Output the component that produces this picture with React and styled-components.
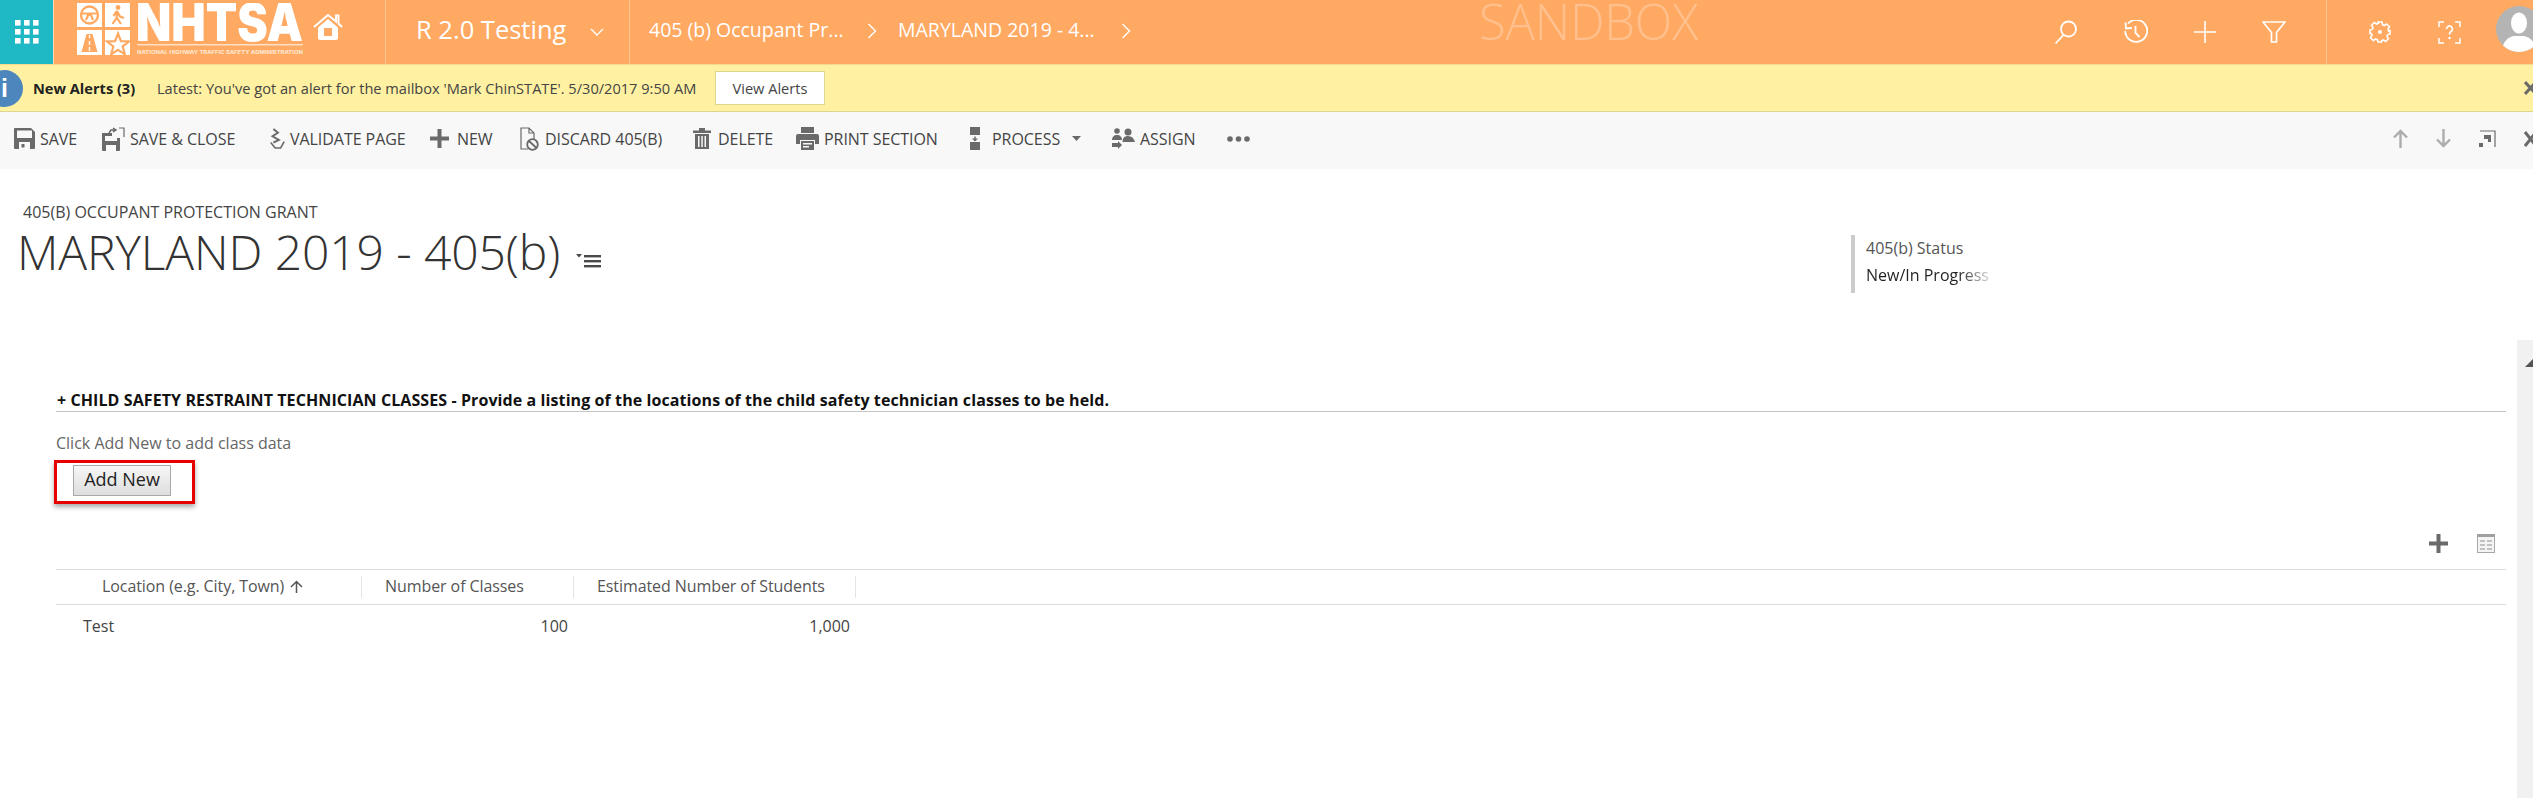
import React from 'react';
import styled, { createGlobalStyle } from 'styled-components';

const GlobalStyle = createGlobalStyle`
  html, body {
    margin: 0;
    height: 100%;
    overflow: hidden;
    background: #fff;
    font-family: "Open Sans", "Noto Sans", "Liberation Sans", sans-serif;
  }
  * { box-sizing: border-box; }
`;

const Shell = styled.div`
  height: 100vh;
  display: flex;
  flex-direction: column;
`;

/* top nav */
const Nav = styled.header`
  position: relative;
  height: 65px;
  flex: none;
  display: flex;
  align-items: stretch;
  background: #ffa962;
  border-bottom: 1px solid #f5d98c;
  color: #fff;
`;

const AppTile = styled.div`
  width: 54px;
  background: #1fb9c6;
  border-right: 1px solid #ffd9b5;
  display: flex;
  align-items: center;
  justify-content: center;
`;

const LogoCell = styled.div`
  width: 332px;
  padding: 3px 0 0 23px;
  display: flex;
  align-items: flex-start;
  border-right: 1px solid #ffc693;
`;

const HouseWrap = styled.div`
  margin: 10px 0 0 10px;
  display: flex;
`;

const EntityCell = styled.div`
  width: 244px;
  padding: 0 0 6px 30px;
  display: flex;
  align-items: center;
  border-right: 1px solid #ffc693;
`;

const EntityName = styled.span`
  font-size: 25.5px;
  white-space: nowrap;
`;

const EntityChevron = styled.svg`
  width: 16px;
  height: 10px;
  margin: 6px 0 0 23px;
`;

const Crumbs = styled.div`
  display: flex;
  align-items: center;
  padding: 0 0 6px 19px;
  font-size: 19.5px;
  white-space: nowrap;
`;

const Crumb = styled.span`
  width: ${(p) => p.$w}px;
`;

const CrumbChevron = styled.svg`
  width: 10px;
  height: 18px;
  margin: 3px 21px 0 0;
`;

const Watermark = styled.div`
  position: absolute;
  left: 1479px;
  top: 0;
  font-size: 49px;
  line-height: 42px;
  font-weight: 300;
  color: #ffc08d;
  letter-spacing: -0.2px;
`;

const NavRight = styled.div`
  margin-left: auto;
  display: flex;
  align-items: stretch;
`;

const NavIcons = styled.div`
  display: flex;
  align-items: center;
  gap: ${(p) => p.$gap}px;
  padding: ${(p) => p.$pad};
  border-left: ${(p) => (p.$line ? '1px solid #ffc693' : 'none')};
`;

const Avatar = styled.svg`
  width: 46px;
  height: 46px;
  margin: 6px -9px 0 35px;
  flex: none;
`;

/* notification bar */
const AlertBar = styled.div`
  position: relative;
  height: 47px;
  flex: none;
  display: flex;
  align-items: center;
  overflow: hidden;
  background: #fff1a1;
  border-bottom: 1px solid #dcd78f;
  font-size: 14.6px;
`;

const InfoDot = styled.div`
  width: 37px;
  height: 37px;
  margin-left: -14px;
  border-radius: 50%;
  background: #4d86bc;
  color: #fff;
  font: 700 25px/37px "Liberation Sans", sans-serif;
  text-align: center;
  flex: none;
`;

const AlertTitle = styled.b`
  margin-left: 10px;
  width: 103px;
  font-weight: 700;
  color: #222;
  white-space: nowrap;
`;

const AlertText = styled.span`
  margin-left: 21px;
  width: 558px;
  color: #444;
  white-space: nowrap;
`;

const AlertButton = styled.button`
  width: 110px;
  height: 34px;
  background: #fff;
  border: 1px solid #dcd78f;
  color: #444;
  font: inherit;
  padding: 0;
`;

const AlertClose = styled.svg`
  position: absolute;
  right: -4px;
  top: 16px;
  width: 13px;
  height: 14px;
`;

/* command bar */
const CommandBar = styled.div`
  height: 57px;
  flex: none;
  display: flex;
  align-items: center;
  background: #f8f8f8;
  padding: 0 0 4px 14px;
  overflow: hidden;
`;

const Command = styled.div`
  display: flex;
  align-items: center;
  gap: ${(p) => p.$gap ?? 5}px;
  width: ${(p) => p.$w}px;
  flex: none;
  font-size: 16px;
  letter-spacing: -0.05px;
  color: #444;
  white-space: nowrap;
`;

const CommandSide = styled.div`
  margin-left: auto;
  display: flex;
  align-items: center;
  gap: 28px;
  margin-right: -4px;
`;

/* body */
const Main = styled.main`
  flex: 1;
  min-height: 0;
  display: flex;
`;

const Content = styled.div`
  flex: 1;
  padding: 36px 11px 0 0;
`;

const Rail = styled.aside`
  width: 16px;
  margin-top: 171px;
  background: #f1f1f1;
  flex: none;
  padding: 10px 0 0 8px;
`;

const Head = styled.div`
  display: flex;
  align-items: flex-start;
  height: 185px;
`;

const HeadTitle = styled.div`
  width: 1851px;
  padding-left: 17px;
`;

const EntityType = styled.div`
  margin: -3px 0 0 6px;
  font-size: 16px;
  line-height: 20px;
  color: #444;
`;

const TitleRow = styled.div`
  display: flex;
  align-items: center;
`;

const Title = styled.h1`
  margin: -1px 0 0;
  font-size: 48px;
  line-height: 62px;
  font-weight: 300;
  letter-spacing: -0.1px;
  color: #333;
`;

const TitleMenu = styled.svg`
  width: 25px;
  height: 15px;
  margin: 16px 0 0 16px;
`;

const Status = styled.div`
  margin-top: 30px;
  height: 58px;
  width: 145px;
  border-left: 4px solid #ccc;
  padding: 3px 0 0 11px;
  font-size: 16px;
`;

const StatusLabel = styled.div`
  color: #555;
  line-height: 20px;
`;

const StatusValue = styled.div`
  margin-top: 7px;
  line-height: 20px;
  width: 128px;
  white-space: nowrap;
  overflow: hidden;
  color: transparent;
  background: linear-gradient(90deg, #222 72%, #f2f2f2 100%);
  -webkit-background-clip: text;
  background-clip: text;
`;

const Section = styled.section`
  margin-left: 56px;
`;

const SectionHeading = styled.div`
  height: 22px;
  border-bottom: 1px solid #c4c4c4;
  padding-left: 1px;
  font-size: 16px;
  line-height: 20px;
  font-weight: 700;
  letter-spacing: 0.09px;
  color: #111;
  white-space: nowrap;
`;

const Hint = styled.div`
  margin-top: 21px;
  font-size: 16px;
  line-height: 20px;
  color: #666;
`;

const Highlight = styled.div`
  margin: 7px 0 0 -2px;
  width: 141px;
  height: 44px;
  border: 3px solid #e60000;
  box-shadow: 0 3px 5px rgba(0, 0, 0, 0.35);
  padding: 2px 0 0 16px;
`;

const AddButton = styled.button`
  display: block;
  width: 98px;
  height: 31px;
  padding: 0 0 3px;
  border: 1px solid #a9a9a9;
  background: linear-gradient(#f6f6f6, #dedede);
  color: #222;
  font-family: inherit;
  font-size: 18px;
`;

const GridTools = styled.div`
  margin-top: 30px;
  height: 35px;
  display: flex;
  justify-content: flex-end;
  align-items: flex-start;
  gap: 29px;
  padding-right: 11px;
`;

const GridHeader = styled.div`
  height: 36px;
  display: flex;
  align-items: center;
  border-top: 1px solid #dcdcdc;
  border-bottom: 1px solid #dcdcdc;
  font-size: 16px;
  letter-spacing: -0.08px;
  color: #555;
`;

const HeadCell = styled.div`
  width: ${(p) => p.$w}px;
  height: 22px;
  padding: 0 0 2px ${(p) => p.$pad}px;
  display: flex;
  align-items: center;
  gap: 6px;
  border-right: 1px solid #e4e4e4;
  white-space: nowrap;
`;

const GridRow = styled.div`
  height: 44px;
  padding-bottom: 2px;
  display: flex;
  align-items: center;
  font-size: 16px;
  color: #444;
`;

const Cell = styled.div`
  width: ${(p) => p.$w}px;
  padding: ${(p) => p.$pad};
  text-align: ${(p) => p.$align || 'left'};
`;

const grey = '#6a6a6a';

const AppGrid = () => (
  <svg width="24" height="24" viewBox="0 0 24 24" fill="#fff">
    {[0, 9, 18].map((y) =>
      [0, 9, 18].map((x) => <rect key={`${x}-${y}`} x={x} y={y} width="5.6" height="5.6" />),
    )}
  </svg>
);

const Logo = () => (
  <svg width="226" height="54" viewBox="0 0 226 54">
    <rect x="0" y="0" width="25" height="24" fill="#fff" />
    <rect x="28" y="0" width="25" height="24" fill="#fff" />
    <rect x="0" y="27" width="25" height="25" fill="#fff" />
    <rect x="28" y="27" width="25" height="25" fill="#fff" />
    <circle cx="12.5" cy="12" r="8.5" fill="none" stroke="#ffa962" strokeWidth="2.4" />
    <path d="M5 10.5h15M9 17l2-5h3l2 5" fill="none" stroke="#ffa962" strokeWidth="2.2" />
    <circle cx="41" cy="4.5" r="2.4" fill="#ffa962" />
    <path d="M40 8l-3.5 5 M40 8l3 5.5 4 1.5 M40.5 9l-1 6-4 6 M40 15l4 6" fill="none" stroke="#ffa962" strokeWidth="2.2" />
    <path d="M9.5 31h6l5 18H4.5z" fill="#ffa962" />
    <path d="M12.5 32v3 M12.5 38v4 M12.5 44v4" stroke="#fff" strokeWidth="1.4" />
    <path d="M41 30.5l2.9 7.6 8.1.4-6.3 5 2.1 7.8-6.8-4.4-6.8 4.4 2.1-7.8-6.3-5 8.1-.4z" fill="none" stroke="#ffa962" strokeWidth="2.2" />
    <text x="59" y="38" fontFamily="Inter, sans-serif" fontWeight="900" fontSize="52" fill="#fff" textLength="167" lengthAdjust="spacingAndGlyphs">NHTSA</text>
    <rect x="60" y="41" width="166" height="1.5" fill="#ffe0c4" />
    <text x="60" y="51" fontFamily="Inter, sans-serif" fontWeight="700" fontSize="5" fill="#ffe9d6" textLength="166" lengthAdjust="spacingAndGlyphs">NATIONAL HIGHWAY TRAFFIC SAFETY ADMINISTRATION</text>
  </svg>
);

const House = () => (
  <svg width="30" height="27" viewBox="0 0 30 27">
    <path d="M1 14L15 2l8 6.5V2.5h2.5v8L29 14" fill="none" stroke="#fff" strokeWidth="2" />
    <path d="M5 14.5L15 6l10 8.5V25a2 2 0 0 1-2 2H7a2 2 0 0 1-2-2z" fill="#fff" />
    <rect x="11" y="15" width="8" height="8" fill="#ffa962" />
  </svg>
);

const Chevron = () => (
  <CrumbChevron viewBox="0 0 10 18">
    <path d="M1.5 2l7 7-7 7" fill="none" stroke="#fff" strokeWidth="1.4" />
  </CrumbChevron>
);

const SearchIcon = () => (
  <svg width="24" height="24" viewBox="0 0 24 24" fill="none" stroke="#fff" strokeWidth="1.8">
    <circle cx="14.5" cy="9" r="7.5" />
    <path d="M9.5 15L1.5 23.5" />
  </svg>
);

const HistoryIcon = () => (
  <svg width="24" height="24" viewBox="0 0 24 24" fill="none" stroke="#fff" strokeWidth="1.8">
    <path d="M4 3.5A11 11 0 1 1 1.2 11" />
    <path d="M1.5 2.5l.5 6 6-.5" />
    <path d="M11.5 6v7l4 4" />
  </svg>
);

const PlusIcon = () => (
  <svg width="22" height="22" viewBox="0 0 22 22" stroke="#fff" strokeWidth="1.6">
    <path d="M11 0v22M0 11h22" />
  </svg>
);

const FilterIcon = () => (
  <svg width="24" height="22" viewBox="0 0 24 22" fill="none" stroke="#fff" strokeWidth="1.7">
    <path d="M1 1h22l-8.5 10.5V21h-5V11.5z" />
  </svg>
);

const GearIcon = () => (
  <svg width="22" height="22" viewBox="0 0 22 22" fill="none" stroke="#fff" strokeWidth="1.6">
    <path d="M9 1h4l.6 2.8 1.7.7 2.4-1.500 2.800 2.800-1.500 2.400.7 1.700L21 9.500v3.500l-2.300.600-.7 1.700 1.500 2.400-2.800 2.800-2.400-1.500-1.700.7L12.500 21H9l-.6-2.300-1.700-.7-2.400 1.500-2.800-2.800 1.500-2.400-.7-1.700L1 12.500V9l2.300-.6.7-1.700-1.500-2.400 2.800-2.800 2.400 1.500 1.700-.7z" />
    <circle cx="11" cy="11" r="2" fill="#fff" stroke="none" />
  </svg>
);

const HelpIcon = () => (
  <svg width="23" height="23" viewBox="0 0 23 23" fill="none" stroke="#fff" strokeWidth="1.500">
    <path d="M6 1H1v5M17 1h5v5M6 22H1v-5M17 22h5v-5" />
    <path d="M8.500 8a3 3 0 1 1 4.500 2.600c-1 .6-1.500 1.300-1.500 2.900" strokeWidth="1.700" />
    <circle cx="11.500" cy="17" r="1.200" fill="#fff" stroke="none" />
  </svg>
);

const AvatarIcon = () => (
  <Avatar viewBox="0 0 46 46">
    <defs>
      <clipPath id="avatar-clip">
        <circle cx="23" cy="23" r="23" />
      </clipPath>
    </defs>
    <circle cx="23" cy="23" r="23" fill="#b4b4b4" />
    <g clipPath="url(#avatar-clip)" fill="#fff">
      <ellipse cx="23" cy="17" rx="8" ry="10.500" />
      <path d="M6 46c0-10 6-15 12-16h10c6 1 12 6 12 16z" />
    </g>
  </Avatar>
);

const Save = () => (
  <svg width="21" height="21" viewBox="0 0 21 21">
    <path fillRule="evenodd" fill={grey} d="M1 0h16l4 4v16a1 1 0 0 1-1 1H1a1 1 0 0 1-1-1V1a1 1 0 0 1 1-1zM3 2.500V10h15V2.500zM5 14v7h11v-7z" />
    <rect x="7.500" y="16" width="3" height="3.500" fill={grey} />
  </svg>
);

const SaveClose = () => (
  <svg width="23" height="24" viewBox="0 0 23 24">
    <path fillRule="evenodd" fill={grey} d="M0 6h10v3H3v5h12V11h3v12a1 1 0 0 1-1 1H1a1 1 0 0 1-1-1zM4 18v6h10v-6z" />
    <path d="M7 6l2-3h4M11 1l3 2-3 2" fill="none" stroke={grey} strokeWidth="1.500" />
    <path d="M17 1h5v9" fill="none" stroke={grey} strokeWidth="1.200" />
  </svg>
);

const Validate = () => (
  <svg width="18" height="24" viewBox="0 0 20 24" fill="none" stroke={grey} strokeWidth="2.200">
    <path d="M6 1l5 4-6 4 7 4-6 3" />
    <path d="M3 16l5 6h6l4-7" strokeWidth="1.800" />
  </svg>
);

const Plus = ({ size = 19 }) => (
  <svg width={size} height={size} viewBox="0 0 19 19" fill={grey}>
    <path d="M7.500 0h4v7.500H19v4h-7.500V19h-4v-7.500H0v-4h7.500z" />
  </svg>
);

const Discard = () => (
  <svg width="19" height="24" viewBox="0 0 19 24" fill="none" stroke={grey} strokeWidth="1.200">
    <path d="M8 22H1V1h8l5 5v6M9 1v5h5" />
    <circle cx="12.500" cy="17.500" r="5.300" strokeWidth="1.800" />
    <path d="M9 14l7.500 7" strokeWidth="1.800" />
  </svg>
);

const Trash = () => (
  <svg width="18" height="21" viewBox="0 0 18 21" fill={grey}>
    <path d="M0 2.500h6V0h6v2.500h6V5H0z" />
    <path fillRule="evenodd" d="M2 6h14v15H2zM5 8v11h1.500V8zM8.300 8v11h1.500V8zM11.500 8v11H13V8z" />
  </svg>
);

const Printer = () => (
  <svg width="23" height="23" viewBox="0 0 23 23">
    <path fill={grey} d="M5 0h13v6H5z" />
    <path fill={grey} d="M2 7h19a2 2 0 0 1 2 2v8h-4v-4H4v4H0V9a2 2 0 0 1 2-2z" />
    <path fill={grey} d="M5 14h13v9H5z" />
    <path fill="#f8f8f8" d="M7 16h9v1.500H7zM7 19h6v1.500H7z" />
  </svg>
);

const ProcessIcon = () => (
  <svg width="10" height="23" viewBox="0 0 10 23" fill={grey}>
    <rect x="0" y="0" width="10" height="8" />
    <rect x="0" y="15" width="10" height="8" />
    <path d="M4.300 9.500h1.400v2H8L5 14.500 2 11.500h2.300z" />
  </svg>
);

const Caret = () => (
  <svg width="9" height="5" viewBox="0 0 9 5" fill={grey}>
    <path d="M0 0h9L4.500 5z" />
  </svg>
);

const Assign = () => (
  <svg width="23" height="22" viewBox="0 0 23 22" fill={grey}>
    <circle cx="5" cy="3" r="2.800" />
    <path d="M0 12c0-3 2-5 5-5s5 2 5 5z" />
    <circle cx="16" cy="4" r="3.500" />
    <path d="M10.500 14c0-4 2-6 5.500-6s6 2 7 6z" />
    <path d="M0 15h6v-2l4 4-4 4v-2H0z" />
  </svg>
);

const Dots = () => (
  <svg width="23" height="6" viewBox="0 0 23 6" fill={grey}>
    <circle cx="3" cy="3" r="2.800" />
    <circle cx="11.500" cy="3" r="2.800" />
    <circle cx="20" cy="3" r="2.800" />
  </svg>
);

const ArrowSvg = styled.svg`
  transform: ${(p) => (p.$down ? 'rotate(180deg)' : 'none')};
`;

const Arrow = ({ down }) => (
  <ArrowSvg $down={down} width="15" height="19" viewBox="0 0 15 19" fill="none" stroke="#adadad" strokeWidth="2.400">
    <path d="M7.500 19V2M1 8.500l6.500-6.500L14 8.500" />
  </ArrowSvg>
);

const Expand = () => (
  <svg width="17" height="18" viewBox="0 0 17 18">
    <path d="M1 1h15v16" fill="none" stroke={grey} strokeWidth="1.200" />
    <path d="M5 5h7v7H9V9H5z" fill={grey} />
    <rect x="0" y="13" width="4" height="4" fill={grey} />
  </svg>
);

const CloseX = () => (
  <svg width="13" height="16" viewBox="0 0 13 16" fill="none" stroke={grey} strokeWidth="3">
    <path d="M1 1l11 14M12 1L1 15" />
  </svg>
);

const HubMenu = () => (
  <TitleMenu viewBox="0 0 25 15" fill="#4a4a4a">
    <path d="M0 1h6L3 4.500z" />
    <rect x="8" y="2" width="17" height="2.400" />
    <rect x="8" y="7" width="17" height="2.400" />
    <rect x="8" y="12" width="17" height="2.400" />
  </TitleMenu>
);

const SortUp = () => (
  <svg width="13" height="13" viewBox="0 0 13 13" fill="none" stroke="#555" strokeWidth="1.500">
    <path d="M6.500 13V1.500M1 7l5.500-5.500L12 7" />
  </svg>
);

const GridIcon = () => (
  <svg width="18" height="19" viewBox="0 0 18 19">
    <rect x="0.500" y="0.500" width="17" height="18" fill="#f4f4f4" stroke="#a8a8a8" />
    <rect x="0" y="0" width="18" height="3" fill="#a0a0a0" />
    <path d="M3 7h5M10 7h5M3 11h5M10 11h5M3 15h5M10 15h5" stroke="#b0b0b0" strokeWidth="1.400" />
  </svg>
);

const commands = [
  { icon: <Save />, label: 'SAVE', w: 88 },
  { icon: <SaveClose />, label: 'SAVE & CLOSE', w: 166 },
  { icon: <Validate />, label: 'VALIDATE PAGE', w: 162, gap: 4 },
  { icon: <Plus />, label: 'NEW', w: 90, gap: 8 },
  { icon: <Discard />, label: 'DISCARD 405(B)', w: 173, gap: 6 },
  { icon: <Trash />, label: 'DELETE', w: 103, gap: 7 },
  { icon: <Printer />, label: 'PRINT SECTION', w: 174 },
  { icon: <ProcessIcon />, label: 'PROCESS', extra: <Caret />, w: 142, gap: 12 },
  { icon: <Assign />, label: 'ASSIGN', w: 115 },
];

const App = () => (
  <Shell>
    <GlobalStyle />
    <Nav>
      <AppTile>
        <AppGrid />
      </AppTile>
      <LogoCell>
        <Logo />
        <HouseWrap>
          <House />
        </HouseWrap>
      </LogoCell>
      <EntityCell>
        <EntityName>R 2.0 Testing</EntityName>
        <EntityChevron viewBox="0 0 16 10">
          <path d="M2 2l6 6 6-6" fill="none" stroke="#fff" strokeWidth="1.400" />
        </EntityChevron>
      </EntityCell>
      <Crumbs>
        <Crumb $w={218}>405 (b) Occupant Pr...</Crumb>
        <Chevron />
        <Crumb $w={223}>MARYLAND 2019 - 4...</Crumb>
        <Chevron />
      </Crumbs>
      <Watermark>SANDBOX</Watermark>
      <NavRight>
        <NavIcons $gap={46} $pad="0 40px 0 0">
          <SearchIcon />
          <HistoryIcon />
          <PlusIcon />
          <FilterIcon />
        </NavIcons>
        <NavIcons $gap={47} $pad="0 0 0 42px" $line>
          <GearIcon />
          <HelpIcon />
        </NavIcons>
        <AvatarIcon />
      </NavRight>
    </Nav>
    <AlertBar>
      <InfoDot>i</InfoDot>
      <AlertTitle>New Alerts (3)</AlertTitle>
      <AlertText>Latest: You've got an alert for the mailbox 'Mark ChinSTATE'. 5/30/2017 9:50 AM</AlertText>
      <AlertButton>View Alerts</AlertButton>
      <AlertClose viewBox="0 0 13 14" fill="none" stroke={grey} strokeWidth="3">
        <path d="M1 1l11 12M12 1L1 13" />
      </AlertClose>
    </AlertBar>
    <CommandBar>
      {commands.map((c) => (
        <Command key={c.label} $w={c.w} $gap={c.gap}>
          {c.icon}
          <span>{c.label}</span>
          {c.extra}
        </Command>
      ))}
      <Dots />
      <CommandSide>
        <Arrow />
        <Arrow down />
        <Expand />
        <CloseX />
      </CommandSide>
    </CommandBar>
    <Main>
      <Content>
        <Head>
          <HeadTitle>
            <EntityType>405(B) OCCUPANT PROTECTION GRANT</EntityType>
            <TitleRow>
              <Title>MARYLAND 2019 - 405(b)</Title>
              <HubMenu />
            </TitleRow>
          </HeadTitle>
          <Status>
            <StatusLabel>405(b) Status</StatusLabel>
            <StatusValue>New/In Progress</StatusValue>
          </Status>
        </Head>
        <Section>
          <SectionHeading>+ CHILD SAFETY RESTRAINT TECHNICIAN CLASSES - Provide a listing of the locations of the child safety technician classes to be held.</SectionHeading>
          <Hint>Click Add New to add class data</Hint>
          <Highlight>
            <AddButton>Add New</AddButton>
          </Highlight>
          <GridTools>
            <Plus />
            <GridIcon />
          </GridTools>
          <GridHeader>
            <HeadCell $w={306} $pad={46}>
              Location (e.g. City, Town)
              <SortUp />
            </HeadCell>
            <HeadCell $w={212} $pad={23}>Number of Classes</HeadCell>
            <HeadCell $w={282} $pad={23}>Estimated Number of Students</HeadCell>
          </GridHeader>
          <GridRow>
            <Cell $w={306} $pad="0 0 0 27px">Test</Cell>
            <Cell $w={206} $align="right">100</Cell>
            <Cell $w={282} $align="right">1,000</Cell>
          </GridRow>
        </Section>
      </Content>
      <Rail>
        <svg width="8" height="8" viewBox="0 0 8 8" fill="#555">
          <path d="M0 8l8-8v8z" />
        </svg>
      </Rail>
    </Main>
  </Shell>
);

export default App;
